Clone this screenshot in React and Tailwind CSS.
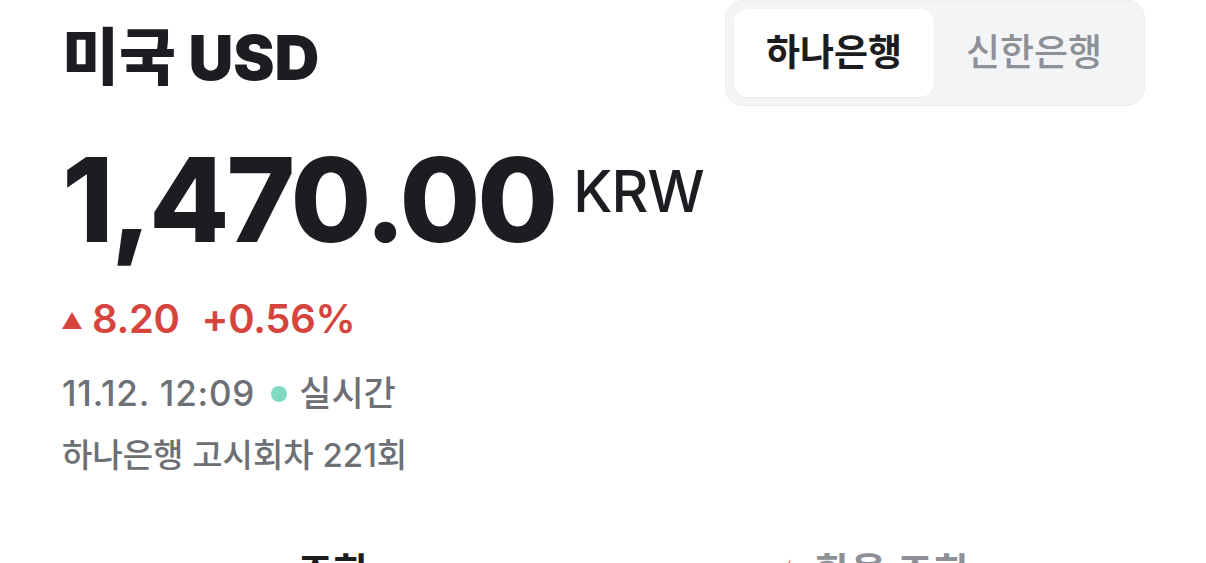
export default function App() {
  const font = { fontFamily: 'Inter, "Noto Sans CJK KR", sans-serif' };
  return (
    <div className="w-[1206px] h-[563px] overflow-hidden bg-white text-[#1c1d21]" style={font}>
      <div className="pl-[62px] pr-[61px]">
        <div className="flex justify-between items-start">
          <h1 className="mt-[27px] text-[62px] leading-none font-black tracking-[0px]">미국 USD</h1>
          <div className="flex w-[420px] h-[106px] p-[8px] pr-[10px] rounded-[18px] bg-[#f3f4f6] border border-[#eceef1]">
            <div className="w-[200px] h-full rounded-[14px] bg-white flex items-center justify-center text-[37px] font-bold text-[#1c1d21] shadow-[0_1px_2px_rgba(0,0,0,0.04)]">
              하나은행
            </div>
            <div className="flex-1 flex items-center justify-center text-[37px] font-medium text-[#8d9096]">
              신한은행
            </div>
          </div>
        </div>
        <div className="mt-[35px] flex items-start">
          <div className="text-[117px] leading-none font-extrabold tracking-[-3px]">1,470.00</div>
          <div className="ml-[18px] mt-[22px] text-[57px] leading-none font-medium tracking-[-1px]">KRW</div>
        </div>
        <div className="mt-[41px] flex items-center text-[40px] leading-none font-semibold text-[#d6453d]">
          <svg width="20" height="17" viewBox="0 0 20 17" className="mr-[10px] mt-[2px]">
            <polygon points="10,0 20,17 0,17" fill="#d6453d" />
          </svg>
          <span className="tracking-[-0.3px]">8.20</span>
          <span className="ml-[22px] tracking-[-0.3px]">+0.56%</span>
        </div>
        <div className="mt-[37px] flex items-center text-[35px] leading-none font-medium text-[#6d7075]">
          <span className="tracking-[0.8px]">11.12. 12:09</span>
          <span className="ml-[16px] w-[16px] h-[16px] rounded-full bg-[#80d9c1]" />
          <span className="ml-[12px]">실시간</span>
        </div>
        <div className="mt-[28px] text-[33px] leading-none font-medium text-[#6d7075]">
          하나은행 고시회차 221회
        </div>
        <div className="mt-[80px] grid grid-cols-2 text-[38px] leading-none font-semibold">
          <div className="flex justify-center">
            <span className="text-[#1c1d21]">조회</span>
          </div>
          <div className="flex items-center justify-center text-[#8d9096]">
            <svg width="16" height="24" viewBox="0 0 16 24" className="mr-[20px]">
              <path d="M12 0 L2 14 L8 14 L4 24 L15 9 L9 9 Z" fill="#e5463d" />
            </svg>
            <span className="tracking-[1px]">환율 조회</span>
          </div>
        </div>
      </div>
    </div>
  );
}
